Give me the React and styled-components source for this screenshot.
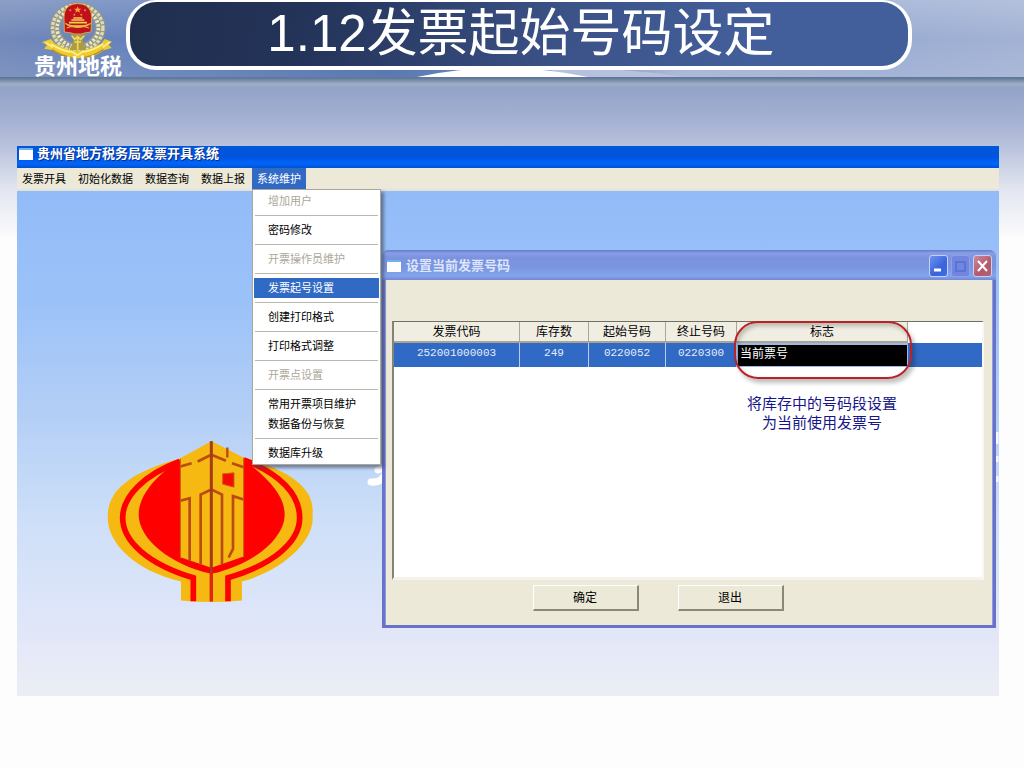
import React from "react";
import styled, { createGlobalStyle } from "styled-components";

const GlobalStyle = createGlobalStyle`
  * { box-sizing: border-box; }
  body {
    margin: 0;
    background: #fdfdfe;
    font-family: "Liberation Sans", "Noto Sans CJK SC", sans-serif;
  }
  button { font-family: inherit; margin: 0; padding: 0; }
`;

const Slide = styled.main`
  min-height: 100vh;
  background: linear-gradient(
    #607797 0, #607797 78px, #9db0c5 84px, #92a3c8 88px,
    #a3b0d1 118px, #b9c2dc 146px, #e3e6f1 190px, #fdfdfe 240px
  );
`;

const Header = styled.header`
  position: relative;
  display: flex;
  align-items: flex-start;
  height: 77px;
  padding: 0 112px 0 30px;
  background:
    linear-gradient(#ffffff30, #ffffff00 50%, #ffffff18),
    linear-gradient(90deg, #7289b9 0, #6682bb 12%, #4a6dab 38%, #6c87bd 56%, #a5b2d5 66%, #9badd3 88%, #a3b2d4);
`;

const HeaderArc = styled.svg`
  position: absolute;
  left: 0;
  bottom: 0;
  width: 100%;
  height: 10px;
`;

const Brand = styled.div`
  position: relative;
  display: flex;
  flex-direction: column;
  align-items: center;
  width: 96px;
  flex: none;
`;

const BrandName = styled.span`
  color: #fff;
  font-size: 22px;
  line-height: 22px;
  font-weight: 700;
  margin-top: -4px;
  white-space: nowrap;
`;

const TitlePill = styled.h1`
  position: relative;
  flex: 1;
  margin: 0;
  padding: 1px 0 0 4px;
  height: 70px;
  border: 4px solid #fff;
  border-top-width: 2px;
  border-radius: 30px;
  background: linear-gradient(100deg, #202e4d 0, #24345a 24%, #3b5287 55%, #435f9b 80%);
  color: #fff;
  font-size: 51px;
  line-height: 62px;
  font-weight: 400;
  text-align: center;
  white-space: nowrap;
`;

const AppWindow = styled.section`
  margin: 69px 25px 0 17px;
`;

const AppTitle = styled.h2`
  display: flex;
  align-items: center;
  gap: 4px;
  height: 22px;
  margin: 0;
  padding: 0 2px 6px;
  background: linear-gradient(#0058d8, #0053e0 50%, #0066fb 80%, #0050d2);
  color: #fff;
  font-size: 13px;
  line-height: 16px;
  font-weight: 700;
  text-shadow: 1px 1px 0 #0a2c84;
`;

const WindowIcon = styled.span`
  width: 14px;
  height: 12px;
  flex: none;
  background: #fff;
  border-top: 2px solid #6fb2ef;
`;

const MenuBar = styled.nav`
  display: flex;
  gap: 2px;
  height: 23px;
  background: #ece9d8;
  border-bottom: 2px solid #dfe3e2;
`;

const MenuSlot = styled.div`
  position: relative;
`;

const MenuButton = styled.button`
  display: block;
  height: 21px;
  padding: 0 5px;
  border: 0;
  background: ${(p) => (p.$open ? "#316ac5" : "transparent")};
  color: ${(p) => (p.$open ? "#fff" : "#000")};
  font-size: 11px;
  line-height: 20px;
  white-space: nowrap;
`;

const Dropdown = styled.div`
  position: absolute;
  z-index: 3;
  top: 21px;
  left: 0;
  width: 129px;
  padding: 1px;
  border: 1px solid #aca899;
  background: #fff;
  box-shadow: 3px 3px 3px #3c485f99;
`;

const DropItem = styled.button`
  display: block;
  width: 100%;
  height: 20px;
  padding: 0 0 0 14px;
  border: 0;
  background: ${(p) => (p.$active ? "#316ac5" : "#fff")};
  color: ${(p) => (p.$active ? "#fff" : "#000")};
  font-size: 11px;
  line-height: 20px;
  text-align: left;
  white-space: nowrap;
  &:disabled { color: #aca899; }
`;

const Divider = styled.hr`
  height: 1px;
  margin: 4px 1px;
  border: 0;
  background: #b9b7ae;
`;

const Desktop = styled.div`
  position: relative;
  height: 505px;
  overflow: hidden;
  background: linear-gradient(
    #93bbf8 0, #9bc2f8 22%, #b4cff6 45%, #cddff8 65%, #dfe6f9 85%, #e6e9f7 92%, #ebeff4
  );
`;

const TaxEmblem = styled.svg`
  position: absolute;
  left: 90px;
  top: 249px;
  width: 206px;
  height: 163px;
`;

const Watermark = styled.svg`
  position: absolute;
  top: 239px;
  width: ${(p) => p.$w}px;
  height: 62px;
  ${(p) => (p.$side === "left" ? "left: 350px;" : "right: 0;")}
`;

const Dialog = styled.section`
  position: absolute;
  z-index: 2;
  left: 365px;
  right: 3px;
  top: 59px;
  border: solid #6872c8;
  border-width: 0 3px 3px;
  border-radius: 7px 7px 0 0;
  background: #ece9d8;
  box-shadow: inset 1px 0 0 #8f9be0, inset -1px 0 0 #8f9be0;
`;

const DialogBar = styled.header`
  display: flex;
  align-items: center;
  gap: 5px;
  height: 30px;
  margin: 0 -3px;
  padding: 1px 4px 0 5px;
  border-radius: 7px 7px 0 0;
  background: linear-gradient(#6578c6 0, #879fe6 3px, #7b93df 8px, #7a96e0 18px, #83a5ea 26px, #7387d5 30px);
`;

const DialogTitle = styled.h3`
  flex: 1;
  margin: 0;
  color: #dce5fb;
  font-size: 13px;
  line-height: 18px;
  font-weight: 700;
`;

const CaptionButtons = styled.div`
  display: flex;
  gap: 3px;
`;

const captionFill = {
  min: "linear-gradient(135deg, #6d94ee, #3a62dc 60%, #3d6fe8)",
  max: "#7187df",
  close: "linear-gradient(135deg, #c88c9d, #b5586a 60%, #b3606f)",
};

const CaptionButton = styled.button`
  width: 19px;
  height: 22px;
  border: 1px solid ${(p) => (p.$kind === "max" ? "#8ea1e8" : "#c4d0f6")};
  border-radius: 3px;
  background: ${(p) => captionFill[p.$kind]};
  svg { display: block; width: 17px; height: 20px; }
`;

const DialogBody = styled.div`
  padding: 41px 9px 14px 7px;
`;

const GridPane = styled.div`
  height: 259px;
  border: solid;
  border-width: 1px 2px 3px;
  border-color: #716f64 #f8f7f2 #f6f4ea #858276;
  background: #fff;
`;

const InvoiceTable = styled.table`
  width: 100%;
  table-layout: fixed;
  border-collapse: separate;
  border-spacing: 0;
`;

const Col = styled.col`
  width: ${(p) => p.$w}px;
`;

const HeadCell = styled.th`
  height: 21px;
  padding: 0;
  border-right: 1px solid #aaa797;
  border-bottom: 2px solid #a9a595;
  background: #f0eee2;
  color: #000;
  font-size: 12px;
  line-height: 18px;
  font-weight: 400;
`;

const HeadRest = styled.td`
  padding: 0;
  background: #fff;
`;

const DataCell = styled.td`
  height: 24px;
  padding: 0 0 4px;
  border-right: 1px solid ${(p) => (p.$rest ? "#316ac5" : "#b9cdef")};
  background: #316ac5;
  color: #e4edfb;
  font-family: "Liberation Mono", monospace;
  font-size: 11px;
  line-height: 18px;
  text-align: center;
`;

const FlagCell = styled.td`
  position: relative;
  height: 24px;
  padding: 0 0 4px 2px;
  border: solid #9fb8e4;
  border-width: 2px 1px 1px;
  background: #000;
  color: #fff;
  font-size: 12px;
  line-height: 16px;
`;

const Callout = styled.span`
  position: absolute;
  top: -24px;
  left: -4px;
  right: -5px;
  height: 58px;
  border: 2px solid #b92328;
  border-radius: 24px;
  box-shadow: 3px 4px 4px #00000040, inset 2px 3px 4px #00000038;
  pointer-events: none;
`;

const Note = styled.p`
  width: 170px;
  margin: 27px 0 0 343px;
  color: #16168a;
  font-size: 15px;
  line-height: 19px;
  text-align: center;
`;

const Actions = styled.div`
  display: flex;
  justify-content: center;
  gap: 39px;
  padding: 5px 60px 0 0;
`;

const PushButton = styled.button`
  width: 106px;
  height: 26px;
  border: solid;
  border-width: 1px 2px 2px 1px;
  border-color: #fff #8b887a #8b887a #fff;
  background: #ece9d8;
  color: #000;
  font-size: 12px;
  line-height: 20px;
`;

const menus = ["发票开具", "初始化数据", "数据查询", "数据上报"];

const dropItems = [
  { label: "增加用户", disabled: true, rule: true },
  { label: "密码修改", rule: true },
  { label: "开票操作员维护", disabled: true, rule: true },
  { label: "发票起号设置", active: true, rule: true },
  { label: "创建打印格式", rule: true },
  { label: "打印格式调整", rule: true },
  { label: "开票点设置", disabled: true, rule: true },
  { label: "常用开票项目维护" },
  { label: "数据备份与恢复", rule: true },
  { label: "数据库升级" },
];

const columns = [
  { label: "发票代码", width: 126 },
  { label: "库存数", width: 69 },
  { label: "起始号码", width: 77 },
  { label: "终止号码", width: 71 },
  { label: "标志", width: 171 },
];

const record = ["252001000003", "249", "0220052", "0220300"];

function NationalEmblem() {
  return (
    <svg width="72" height="60" viewBox="124 0 216 180" aria-hidden="true">
      <ellipse cx="231" cy="84" rx="68" ry="62" fill="none" stroke="#8f9694" strokeWidth="31" />
      <ellipse cx="231" cy="84" rx="75" ry="69" fill="none" stroke="#dddcae" strokeWidth="11" strokeDasharray="9 4" />
      <ellipse cx="231" cy="84" rx="62" ry="57" fill="none" stroke="#ece8c4" strokeWidth="11" strokeDasharray="7 5" />
      <ellipse cx="231" cy="84" rx="69" ry="63" fill="none" stroke="#b4a14b" strokeWidth="4" strokeDasharray="4 8" />
      <path d="M207 104h50l-12 16 12 30h-50l12-30z" fill="#ad9b42" />
      <path d="M214 108l8 10 9-8 9 8 10-10M231 112v38M221 126h20" fill="none" stroke="#efd85a" strokeWidth="5" />
      <path d="M190 52C190 24 207 11 231 11s42 13 42 41l-2 44c-13 2-23 3-29 6h-22c-7-4-17-4-29-6z" fill="#c1101d" stroke="#d4ab39" strokeWidth="3" />
      <path d="M231 19l3 7h8l-6 5 2 7-7-4-7 4 2-7-6-5h8z" fill="#ffa73b" />
      <g fill="#ef8b35"><circle cx="209" cy="31" r="3" /><circle cx="253" cy="31" r="3" /><circle cx="221" cy="44" r="3" /><circle cx="242" cy="44" r="3" /></g>
      <path d="M212 60h39M218 54h27M205 68h54M201 75q30 9 62 0" fill="none" stroke="#f0cf50" strokeWidth="5" />
      <path d="M194 70q37 24 76 0M198 84q33-14 67 0" fill="none" stroke="#dfb43a" strokeWidth="4" />
      <path d="M124 126l27-9 12 14q36 20 70 22 36-4 68-22l11-14 22 8-10 9 9 10-24 7q-26 20-54 24h-44q-29-6-54-24l-27-5 9-10z" fill="#edcb30" />
      <path d="M151 132q32 22 65 24l14 10 14-10q32-3 64-24M136 128l20 14M327 126l-21 16" fill="none" stroke="#fff08c" strokeWidth="5" />
      <path d="M154 149q28 19 61 24M308 148q-28 20-60 25" fill="none" stroke="#b89125" strokeWidth="4" />
    </svg>
  );
}

function LanternEmblem() {
  return (
    <TaxEmblem viewBox="50 30 618 486" aria-hidden="true">
      <path d="M270 84L363 32l93 48 26 7c100 30 185 78 185 150v28c0 70-90 155-212 188v57q-92 9-183 0v-57C136 420 52 340 52 260 52 178 120 125 270 84z" fill="#f6b912" />
      <path d="M268 93C160 133 97 198 97 262c0 70 74 138 212 180v70M460 88c110 42 168 104 168 174 0 70-74 138-215 180v70" fill="none" stroke="#f00" strokeWidth="17" />
      <path d="M270 87C190 140 145 198 145 252c0 74 95 151 218 178 123-27 220-104 220-178 0-55-44-105-123-165z" fill="#f00" />
      <path d="M270 84l93-52 97 50v296l-97 34-93-32z" fill="#f6b912" />
      <path d="M270 108l34-10M322 93l41-20 44 18M425 98l35 12M270 211l28-8v188M331 402V192l32-15 32 15v210M460 207l-32-10v150M428 197v158l-13 26" fill="none" stroke="#ba4b12" strokeWidth="8" />
      <path d="M397 130l34-3v43l-34-9z" fill="#f30b05" stroke="#d95d0a" strokeWidth="3" />
      <path d="M411 51v30" stroke="#bd480d" strokeWidth="7" />
      <path d="M363 32v480" stroke="#a63b16" strokeWidth="9" />
      <path d="M363 425v88" stroke="#df280d" strokeWidth="10" />
      <path d="M270 84v300M460 82v298" stroke="#c55d10" strokeWidth="3" />
    </TaxEmblem>
  );
}

export default function App() {
  return (
    <Slide>
      <GlobalStyle />
      <Header>
        <HeaderArc viewBox="0 0 1024 10" preserveAspectRatio="none" aria-hidden="true">
          <path d="M540 0Q630 1 685 10H570z" fill="#b7c1de" />
          <path d="M417 10Q500-8 588 10z" fill="#fff" />
        </HeaderArc>
        <Brand>
          <NationalEmblem />
          <BrandName>贵州地税</BrandName>
        </Brand>
        <TitlePill>1.12发票起始号码设定</TitlePill>
      </Header>

      <AppWindow>
        <AppTitle><WindowIcon />贵州省地方税务局发票开具系统</AppTitle>
        <MenuBar>
          {menus.map((m) => (
            <MenuSlot key={m}><MenuButton type="button">{m}</MenuButton></MenuSlot>
          ))}
          <MenuSlot>
            <MenuButton type="button" $open aria-expanded="true">系统维护</MenuButton>
            <Dropdown>
              {dropItems.map((it) => (
                <React.Fragment key={it.label}>
                  <DropItem type="button" disabled={it.disabled} $active={it.active}>{it.label}</DropItem>
                  {it.rule && <Divider />}
                </React.Fragment>
              ))}
            </Dropdown>
          </MenuSlot>
        </MenuBar>

        <Desktop>
          <LanternEmblem />
          <Watermark $w={24} $side="left" viewBox="0 0 24 62" aria-hidden="true">
            <path d="M4 52q9 1 13-6M11 40l8-3" fill="none" stroke="#fff" strokeWidth="7" strokeLinecap="round" />
          </Watermark>
          <Watermark $w={3} $side="right" viewBox="0 0 3 62" aria-hidden="true">
            <path d="M1 2v12M1 26v6M1 46v6" stroke="#f7faff" strokeWidth="3" />
          </Watermark>

          <Dialog>
            <DialogBar>
              <WindowIcon />
              <DialogTitle>设置当前发票号码</DialogTitle>
              <CaptionButtons>
                <CaptionButton type="button" $kind="min" aria-label="最小化">
                  <svg viewBox="0 0 17 20"><path d="M4 14h7" stroke="#fff" strokeWidth="3" /></svg>
                </CaptionButton>
                <CaptionButton type="button" $kind="max" disabled aria-label="最大化">
                  <svg viewBox="0 0 17 20"><path d="M4 6h9v9H4z" fill="none" stroke="#5b72d6" strokeWidth="2" /></svg>
                </CaptionButton>
                <CaptionButton type="button" $kind="close" aria-label="关闭">
                  <svg viewBox="0 0 17 20"><path d="M4 5l9 10M13 5L4 15" stroke="#fff" strokeWidth="2" /></svg>
                </CaptionButton>
              </CaptionButtons>
            </DialogBar>
            <DialogBody>
              <GridPane>
                <InvoiceTable>
                  <colgroup>
                    {columns.map((c) => <Col key={c.label} $w={c.width} />)}
                    <col />
                  </colgroup>
                  <thead>
                    <tr>
                      {columns.map((c) => <HeadCell key={c.label} scope="col">{c.label}</HeadCell>)}
                      <HeadRest />
                    </tr>
                  </thead>
                  <tbody>
                    <tr>
                      {record.map((v) => <DataCell key={v}>{v}</DataCell>)}
                      <FlagCell>当前票号<Callout /></FlagCell>
                      <DataCell $rest />
                    </tr>
                  </tbody>
                </InvoiceTable>
                <Note>将库存中的号码段设置<br />为当前使用发票号</Note>
              </GridPane>
              <Actions>
                <PushButton type="button">确定</PushButton>
                <PushButton type="button">退出</PushButton>
              </Actions>
            </DialogBody>
          </Dialog>
        </Desktop>
      </AppWindow>
    </Slide>
  );
}
